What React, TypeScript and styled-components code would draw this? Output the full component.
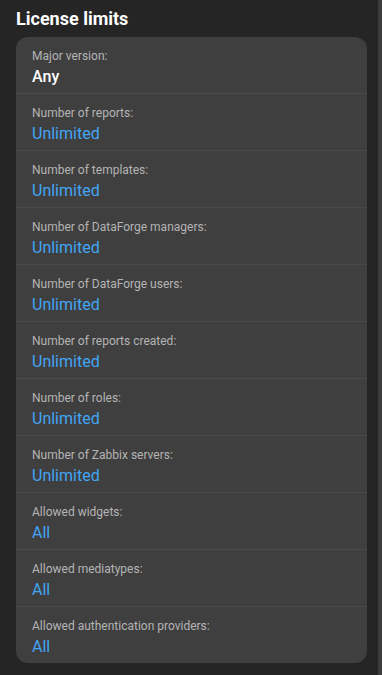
import React from "react";
import styled, { createGlobalStyle } from "styled-components";

const GlobalStyle = createGlobalStyle`
  html, body {
    margin: 0;
    padding: 0;
    background: #252525;
  }
  body {
    font-family: Roboto, "Liberation Sans", Arial, sans-serif;
    -webkit-font-smoothing: antialiased;
  }
`;

const Page = styled.div`
  display: flex;
  width: 382px;
  height: 675px;
  overflow: hidden;
  background: #252525;
`;

const Content = styled.div`
  flex: 1;
  display: flex;
  flex-direction: column;
  padding: 7px 11px 0 16px;
  min-width: 0;
`;

const ScrollTrack = styled.div`
  width: 4px;
  flex: none;
  background: #3d3d3d;
`;

const Title = styled.h2`
  margin: 0 0 6px;
  font-size: 18px;
  line-height: 24px;
  font-weight: 700;
  color: #ffffff;
`;

const Card = styled.div`
  background: #3f3f3f;
  border-radius: 12px;
  overflow: hidden;
  display: flex;
  flex-direction: column;
`;

const Row = styled.div`
  display: flex;
  flex-direction: column;
  gap: 3px;
  padding: 11px 16px 6px;
  height: 56px;
  box-sizing: border-box;
  & + & {
    border-top: 1px solid #4a4a4a;
    height: 57px;
  }
`;

const Label = styled.div`
  font-size: 12px;
  line-height: 16px;
  color: #b4b4b4;
`;

const Value = styled.div<{ $accent?: boolean }>`
  font-size: 16px;
  line-height: 20px;
  color: ${(p) => (p.$accent ? "#42a5f5" : "#ffffff")};
  font-weight: ${(p) => (p.$accent ? 400 : 500)};
`;

const items: { label: string; value: string; accent: boolean }[] = [
  { label: "Major version:", value: "Any", accent: false },
  { label: "Number of reports:", value: "Unlimited", accent: true },
  { label: "Number of templates:", value: "Unlimited", accent: true },
  { label: "Number of DataForge managers:", value: "Unlimited", accent: true },
  { label: "Number of DataForge users:", value: "Unlimited", accent: true },
  { label: "Number of reports created:", value: "Unlimited", accent: true },
  { label: "Number of roles:", value: "Unlimited", accent: true },
  { label: "Number of Zabbix servers:", value: "Unlimited", accent: true },
  { label: "Allowed widgets:", value: "All", accent: true },
  { label: "Allowed mediatypes:", value: "All", accent: true },
  { label: "Allowed authentication providers:", value: "All", accent: true },
];

export default function App() {
  return (
    <>
      <GlobalStyle />
      <Page>
        <Content>
          <Title>License limits</Title>
          <Card>
            {items.map((it) => (
              <Row key={it.label}>
                <Label>{it.label}</Label>
                <Value $accent={it.accent}>{it.value}</Value>
              </Row>
            ))}
          </Card>
        </Content>
        <ScrollTrack />
      </Page>
    </>
  );
}
